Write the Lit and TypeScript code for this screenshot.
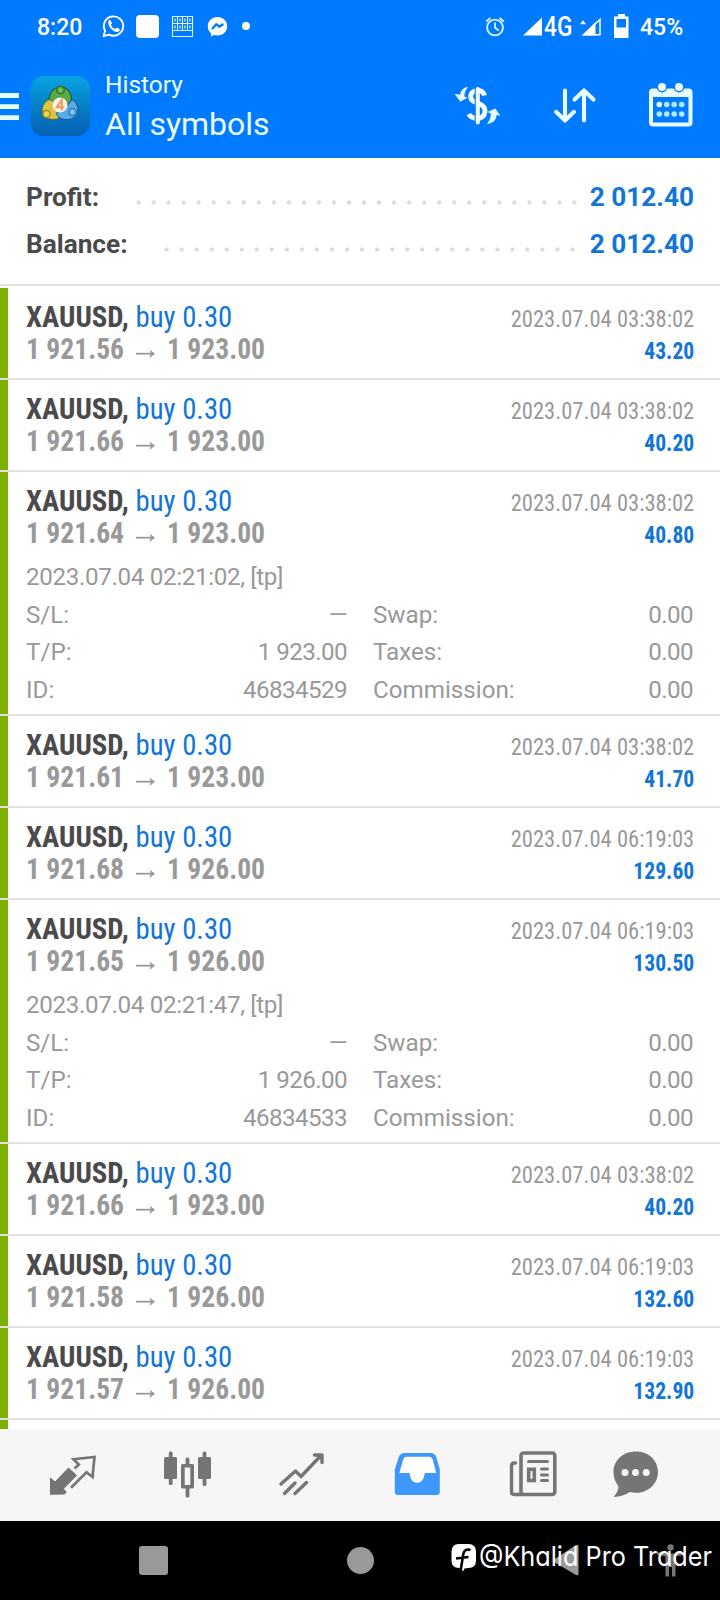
import { LitElement, html, css, svg, nothing } from "lit";
import { customElement, property } from "lit/decorators.js";

interface Deal {
  open: string;
  close: string;
  time: string;
  profit: string;
  details?: { opened: string; tp: string; id: string };
}

const DEALS: Deal[] = [
  { open: "1 921.56", close: "1 923.00", time: "2023.07.04 03:38:02", profit: "43.20" },
  { open: "1 921.66", close: "1 923.00", time: "2023.07.04 03:38:02", profit: "40.20" },
  {
    open: "1 921.64", close: "1 923.00", time: "2023.07.04 03:38:02", profit: "40.80",
    details: { opened: "2023.07.04 02:21:02, [tp]", tp: "1 923.00", id: "46834529" },
  },
  { open: "1 921.61", close: "1 923.00", time: "2023.07.04 03:38:02", profit: "41.70" },
  { open: "1 921.68", close: "1 926.00", time: "2023.07.04 06:19:03", profit: "129.60" },
  {
    open: "1 921.65", close: "1 926.00", time: "2023.07.04 06:19:03", profit: "130.50",
    details: { opened: "2023.07.04 02:21:47, [tp]", tp: "1 926.00", id: "46834533" },
  },
  { open: "1 921.66", close: "1 923.00", time: "2023.07.04 03:38:02", profit: "40.20" },
  { open: "1 921.58", close: "1 926.00", time: "2023.07.04 06:19:03", profit: "132.60" },
  { open: "1 921.57", close: "1 926.00", time: "2023.07.04 06:19:03", profit: "132.90" },
];

@customElement("status-bar")
class StatusBar extends LitElement {
  static styles = css`
    :host { display: flex; align-items: flex-start; height: 53px; color: #fff; font-weight: 500; font-size: 23px; }
    svg { display: block; flex: none; }
    .clock { width: 65px; padding-left: 37px; white-space: nowrap; line-height: 55px; }
    .gap { flex: 1; }
    .net { font-size: 27px; width: 28px; line-height: 54px; }
    .net span { display: inline-block; transform: scaleX(0.84); transform-origin: left center; }
    .pct { font-size: 23px; line-height: 55px; width: 89px; padding-left: 9px; box-sizing: border-box; }
  `;
  render() {
    return html`
      <div class="clock">8:20</div>
      <svg width="150" height="53" viewBox="102 0 150 53" fill="none">
        <path d="M103.500 36.200l1.600-5.300a9.700 9.700 0 1 1 4 3.800z" stroke="#fff" stroke-width="1.900" stroke-linejoin="round"/>
        <path d="M108.500 20.800c.8-.9 1.900-1 2.400 0l.9 2.100c.2.700-.2 1.200-.9 2 1 2 2.300 3.200 4.300 4 .6-.7 1.200-1.400 1.900-1.100l2.100 1c1 .6.600 1.800-.1 2.500-3.500 2.800-12.500-4.200-10.600-10.500z" fill="#fff"/>
        <rect x="136" y="15" width="23" height="23" rx="4" fill="#fff"/>
        <path d="M172.500 16.500h20v20h-20zM172.500 23.500h20M172.500 30.500h20M177.500 16.500v14M182.500 16.500v14M187.500 16.500v14" stroke="#d8f4ff" stroke-width="1.100"/>
        <path d="M175 18.500v3M180 18.500v3M185 18.500v3M190 18.500v3M175 25.500v3M180 25.500v3M185 25.500v3M190 25.500v3" stroke="#bfe6ff" stroke-width="1.400"/>
        <path d="M217.500 17c-5.600 0-9.700 4-9.700 9.300 0 2.900 1.200 5.300 3.100 7v3.300l3-1.700c1.100.3 2.300.5 3.600.5 5.600 0 9.700-4 9.700-9.200s-4.100-9.200-9.700-9.200z" fill="#fff"/>
        <path d="M212 29l4.300-4.800 3 2.500 4-2.700" stroke="#007aff" stroke-width="2.300" stroke-linejoin="round"/>
        <circle cx="246" cy="26" r="4" fill="#fff"/>
      </svg>
      <div class="gap"></div>
      <svg width="60" height="53" viewBox="484 0 60 53" fill="none">
        <circle cx="495" cy="27.500" r="7.900" stroke="#d8f4ff" stroke-width="1.900"/>
        <path d="M495 22.500v5.300l3.800 2.700M486.200 21.500l4.200-3.500M503.800 21.500l-4.200-3.500" stroke="#d8f4ff" stroke-width="1.800"/>
        <path d="M523 35.500L542 17.500v18z" fill="#fff"/>
      </svg>
      <div class="net"><span>4G</span></div>
      <svg width="59" height="53" viewBox="572 0 59 53" fill="none">
        <path d="M580 24.200l3-4 3 4z" fill="#fff"/>
        <path d="M582.500 35.500L595.500 22v13.500z" fill="#fff"/>
        <path d="M583.500 34.800L600 19.500v15.300z" stroke="#fff" stroke-width="1.500"/>
        <path d="M618 14h7v2.500h3.500v21.500h-14.500v-21.500h4z" fill="#fff"/>
        <rect x="616.500" y="19" width="9.500" height="8.500" fill="#007aff"/>
      </svg>
      <div class="pct">45%</div>
    `;
  }
}

@customElement("app-bar")
class AppBar extends LitElement {
  static styles = css`
    :host { display: flex; height: 105px; color: #eafcff; }
    svg { display: block; flex: none; }
    .titles { padding: 17px 0 0 15px; flex: 1; white-space: nowrap; }
    .small { font-size: 24.500px; line-height: 30px; }
    .big { font-size: 32px; line-height: 40px; margin-top: 4px; }
  `;
  render() {
    return html`
      <svg width="90" height="105" viewBox="0 53 90 105">
        <defs>
          <linearGradient id="tile" x1="0" y1="0" x2="0" y2="1">
            <stop offset="0" stop-color="#08a4e2"/><stop offset=".5" stop-color="#067fc6"/><stop offset="1" stop-color="#0560b4"/>
          </linearGradient>
          <radialGradient id="g"><stop offset="0" stop-color="#8fd46a"/><stop offset="1" stop-color="#3b8f2c"/></radialGradient>
          <radialGradient id="y"><stop offset="0" stop-color="#f9e86e"/><stop offset="1" stop-color="#d9b52e"/></radialGradient>
          <radialGradient id="b"><stop offset="0" stop-color="#9cdcff"/><stop offset="1" stop-color="#3c98dc"/></radialGradient>
        </defs>
        <path d="M0 95.500h19M0 106.700h19M0 117.700h19" stroke="#e6fbff" stroke-width="4.800"/>
        <rect x="30.500" y="76" width="59.500" height="60" rx="13" fill="url(#tile)"/>
        <path d="M60.500 87c6 0 11.500 5 11 13.500l-5 6h-13l-4.500-6c0-8.500 5.500-13.500 11.500-13.500z" fill="#58a848" stroke="#1f5a4a" stroke-width="1.200"/>
        <path d="M49 99.500c-5 2-8 8.500-6.500 15 2 4.500 10 6 16 4l3-8-5-8z" fill="#dcc445" stroke="#5d6a3b" stroke-width="1"/>
        <path d="M72 99.500c5 3 7.500 9 5 15-3 5-12 7-18 3l-3-4 9-5z" fill="#58aae2" stroke="#17528f" stroke-width="1"/>
        <circle cx="60.500" cy="90" r="4" fill="url(#g)" stroke="#26692a" stroke-width="1"/>
        <circle cx="46.500" cy="114" r="3.800" fill="url(#y)" stroke="#8b7a20" stroke-width="1"/>
        <circle cx="72.500" cy="112" r="3.800" fill="url(#b)" stroke="#2377b8" stroke-width="1"/>
        <circle cx="60" cy="105" r="7.500" fill="#f7f1ec"/>
        <path d="M61.800 110.500v-10.500l-5 7.200h7.500" fill="none" stroke="#ee9a5c" stroke-width="2"/>
      </svg>
      <div class="titles">
        <div class="small">History</div>
        <div class="big">All symbols</div>
      </div>
      <svg width="270" height="105" viewBox="450 53 270 105" fill="none" stroke-linecap="round" stroke-linejoin="round">
        <path d="M484.500 95.500c-1-4.500-6.500-6.700-11-4-4 2.600-3.700 7.600.3 10 4 2.300 11 2.600 11.200 9.300.1 6.500-5.500 8.300-9.500 7.600-3.400-.6-5.600-2-6.700-4.400" stroke="#f2fdff" stroke-width="4.800" stroke-linecap="butt"/>
        <path d="M475.300 87.500v36" stroke="#007aff" stroke-width="1.300"/>
        <path d="M477.800 89v33.500" stroke="#f2fdff" stroke-width="4"/>
        <path d="M468.300 87c-4.500.1-7.400 3-8.200 7.800l-5.500-1 5.700 8 7-4-3-1.200c.3-4 1.300-6.800 4-9.600z" fill="#e6fbff"/>
        <path d="M487 124c5.500-.5 9.300-3.400 9.700-9.200l3.700 1.200-5-7.600-8 3.700 3.500 1.500c-.2 4.400-1.300 7.300-3.900 10.400z" fill="#e6fbff"/>
        <path d="M565 90.500v30M556 111.800l9 8.700 9-8.700M584 120.500v-30M574.500 99.500l9.500-9 9.500 9" stroke="#e9fcff" stroke-width="4.100"/>
        <rect x="651" y="90.500" width="39.500" height="34" rx="2" stroke="#e9fcff" stroke-width="4"/>
        <path d="M651 90h39.500v7H651z" fill="#e9fcff"/>
        <circle cx="662" cy="87" r="5.400" fill="#007aff"/><circle cx="679" cy="87" r="5.400" fill="#007aff"/>
        <circle cx="662" cy="87" r="4" fill="#e9fcff"/><circle cx="679" cy="87" r="4" fill="#e9fcff"/>
        ${[659.3, 666.7, 674.2, 681.7].map(
          (x, i) => svg`<circle cx=${x} cy="104.500" r="2.800" fill=${i ? "#aee9ff" : "#effcff"}/><circle cx=${x} cy="114" r="2.800" fill="#aee9ff"/>`
        )}
      </svg>
    `;
  }
}

@customElement("account-summary")
class AccountSummary extends LitElement {
  static styles = css`
    :host { display: block; height: 126px; box-sizing: content-box; border-bottom: 2px solid #e2e2e2; }
    .list { padding: 16px 26px 0; }
    .line { display: flex; font-weight: 700; font-size: 26.200px; line-height: 47px; color: #4a4a4c; white-space: nowrap; }
    .value { color: #1275d8; }
    .dots { flex: none; height: 5px; margin-top: 26px; background: radial-gradient(circle at center, #dcdcdc 0 1.8px, transparent 2.500px) right center / 15.040px 5px repeat-x; }
    .profit { width: 448px; margin-right: 8px; }
    .balance { width: 420px; margin-right: 10px; }
    .gap { flex: 1; }
  `;
  render() {
    return html`<div class="list">
      <div class="line"><span>Profit:</span><span class="gap"></span><span class="dots profit"></span><span class="value">2 012.40</span></div>
      <div class="line"><span>Balance:</span><span class="gap"></span><span class="dots balance"></span><span class="value">2 012.40</span></div>
    </div>`;
  }
}

@customElement("deal-row")
class DealRow extends LitElement {
  @property({ attribute: false }) deal!: Deal;
  static styles = css`
    :host { display: block; border-bottom: 2px solid #e2e2e2; }
    .row { height: 90px; box-sizing: border-box; border-left: 8px solid #7db000; padding: 13px 26px 0 18px; }
    .open { height: 242px; }
    .top { display: flex; justify-content: space-between; height: 64px; white-space: nowrap; line-height: 32px; font-stretch: 75%; }
    .left { font-size: 30px; }
    .title { transform: scaleX(0.958); transform-origin: left center; }
    .symbol { font-weight: 700; color: #4a4a4c; }
    .side { color: #1275d8; }
    .prices { font-weight: 700; color: #999; display: flex; }
    .price { width: 97px; }
    .price span { display: inline-block; transform: scaleX(0.92); transform-origin: left center; }
    .arrow { width: 20px; height: 32px; margin: 0 10.500px 0 13px; }
    .right { font-size: 24px; text-align: right; padding-top: 2px; color: #999; }
    .time { transform: scaleX(0.94); transform-origin: right center; }
    .profit { font-weight: 700; color: #1275d8; transform: scaleX(0.9); transform-origin: right center; }
    .details { margin-top: 10px; font-size: 24.200px; line-height: 37.500px; color: #999; }
    .opened { letter-spacing: -0.350px; }
    .grid { display: grid; grid-template-columns: 321px 320px; column-gap: 26px; }
    .pair { display: flex; justify-content: space-between; }
    .num { letter-spacing: -0.600px; }
  `;
  render() {
    const d = this.deal;
    const x = d.details;
    const pair = (k: string, v: string) => html`<div class="pair"><span>${k}</span><span class="num">${v}</span></div>`;
    return html`<div class="row ${x ? "open" : ""}">
      <div class="top">
        <div class="left">
          <div class="title"><span class="symbol">XAUUSD,</span> <span class="side">buy 0.30</span></div>
          <div class="prices"><div class="price"><span>${d.open}</span></div>
            <svg class="arrow" viewBox="0 0 20 32" fill="none" stroke="#999" stroke-width="1.800"><path d="M0 20.700h17"/><path d="M13.500 16.500l5.500 4.200-5.500 4.200 1.500-4.200z" fill="#999" stroke="none"/></svg>
            <div class="price"><span>${d.close}</span></div></div>
        </div>
        <div class="right"><div class="time">${d.time}</div><div class="profit">${d.profit}</div></div>
      </div>
      ${x
        ? html`<div class="details"><div class="opened">${x.opened}</div>
            <div class="grid">
              ${pair("S/L:", "—")}${pair("Swap:", "0.00")}
              ${pair("T/P:", x.tp)}${pair("Taxes:", "0.00")}
              ${pair("ID:", x.id)}${pair("Commission:", "0.00")}
            </div></div>`
        : nothing}
    </div>`;
  }
}

@customElement("tab-bar")
class TabBar extends LitElement {
  static styles = css`
    :host { display: grid; grid-template-columns: repeat(5, 115.400px) 91px; padding-left: 14px; height: 92px; background: #f6f6f6; box-sizing: border-box; flex: none; }
    svg { display: block; width: 50px; height: 50px; margin: 20px auto 0; }
  `;
  render() {
    return html`
      <svg viewBox="47 1449 50 50" fill="none">
        <path d="M50.500 1478l4.500 4 13.500-14 8 7.400-13.200 13.600 3 2.800-1.700 2.200L50.500 1494.300z" fill="#757575" stroke="#757575" stroke-linejoin="round"/>
        <path d="M74.500 1468.500l4.300-4-5.300-5.300 21-2.200-2 20-6-4.800-15.500 15.500" stroke="#757575" stroke-width="2.700"/>
      </svg>
      <svg viewBox="162 1449 50 50">
        <g fill="#757575"><rect x="164" y="1457" width="13" height="22" rx="1.500"/><rect x="168.800" y="1451.500" width="3.800" height="33.500" rx="1.500"/>
        <rect x="198" y="1457" width="13" height="22" rx="1.500"/><rect x="202.600" y="1451.500" width="3.800" height="34.500" rx="1.500"/>
        <rect x="185.600" y="1457.500" width="3.800" height="40" rx="1.500"/><rect x="181" y="1464" width="13" height="24.500" rx="1.500"/></g>
        <rect x="184.700" y="1467.500" width="5.600" height="17.500" fill="#f6f6f6"/>
      </svg>
      <svg viewBox="277.500 1449 50 50" fill="none" stroke="#757575" stroke-width="3.400" stroke-linecap="round" stroke-linejoin="round">
        <path d="M281.500 1484l14.500-13 5.500 5.500 20.500-21.500M315 1455h7.500v7.500M285 1493.500l10.500-10.500M295.500 1493.500l11.500-11"/>
      </svg>
      <svg viewBox="393.200 1449 50 50">
        <path d="M405 1453h25.500q4.500 0 6 4l3.500 12.500v22.500q0 3-3 3h-39q-3 0-3-3v-22.500l4-12.500q1.500-4 6-4z" fill="#3e98fb"/>
        <path d="M406 1456.700h23.500q2.500 0 3.300 2.500l3.700 13.800h-11.500q-1 9.800-7.700 9.800t-7.700-9.800h-10.100l4-13.800q.8-2.500 2.500-2.500z" fill="#fff"/>
      </svg>
      <svg viewBox="508 1449 50 50" fill="none" stroke="#757575" stroke-linecap="round" stroke-linejoin="round">
        <rect x="521" y="1453" width="33.800" height="41.500" rx="2.500" stroke-width="3.600"/>
        <path d="M515.500 1463h-1q-3 0-3 3v25.500q0 3 3 3h8" stroke-width="3.400"/>
        <path d="M528.500 1461.500h19M541.500 1469h6M541.500 1475h6M541.500 1480.500h6" stroke-width="3"/>
        <rect x="528.700" y="1469.300" width="5.600" height="11.200" stroke-width="3.600" stroke-linejoin="miter"/>
      </svg>
      <svg viewBox="611.500 1449 50 50">
        <path d="M636.300 1451.500c12.500 0 22.200 8.500 22.200 20.500 0 11.800-9.700 20.800-22.200 20.800-1.800 0-4-.2-5.800-.7-4.800 3-9.800 4.600-16.500 4.900 3.500-3.700 5-7 5-10.700-3-3.700-5-8.500-5-14.300 0-12 9.800-20.500 22.300-20.500z" fill="#757575"/>
        <g fill="#f6f6f6"><circle cx="625.500" cy="1472.500" r="3.500"/><circle cx="636" cy="1472.500" r="3.500"/><circle cx="646.700" cy="1472.500" r="3.500"/></g>
      </svg>
    `;
  }
}

@customElement("system-nav")
class SystemNav extends LitElement {
  static styles = css`
    :host { display: block; position: relative; height: 79px; background: #000; flex: none; }
    .keys { display: block; }
    .mark { position: absolute; left: 451px; top: 18px; display: flex; align-items: center; color: #fff; white-space: nowrap; }
    .name { font-family: Inter, Roboto, sans-serif; font-feature-settings: "cv11"; font-size: 27.500px; line-height: 34px; height: 36px; margin-left: 3px; font-weight: 400; width: 233px; transform: scaleX(0.918); transform-origin: left center; }
  `;
  render() {
    return html`
      <svg class="keys" width="720" height="79" viewBox="0 1521 720 79" fill="#999">
        <rect x="139" y="1546" width="29" height="29" rx="3"/>
        <circle cx="360.500" cy="1560.500" r="13.500"/>
        <path d="M554 1559.500q-2 1 0 2.500l22 13q2.500 1 2.500-1v-28q0-2-2.500-1z"/>
        <g fill="#777"><circle cx="670.500" cy="1547.500" r="3.200"/><path d="M657 1552l9.500 1.500h8l9.500-1.500v2.700l-8.500 1.800v20h-3.500v-9.500h-3v9.500h-3.500v-20l-8.500-1.800z"/></g>
      </svg>
      <div class="mark">
        <svg width="25" height="34" viewBox="451 1540 25 34">
          <path d="M459 1544h9.500q7.500 0 7.500 7.500v9q0 7.500-7.500 7.500l-4 .5-1.500 3-2-3.500h-2q-7.500 0-7.500-7.500v-9q0-7.500 7.500-7.500z" fill="#fff"/>
          <path d="M470.500 1550c-4-1.500-6.500.5-7.200 4l-2.800 17.500M456 1558.500l12.500-1.500" fill="none" stroke="#000" stroke-width="2.600"/>
        </svg>
        <span class="name">@Khalid Pro Trader</span>
      </div>
    `;
  }
}

@customElement("app-root")
class AppRoot extends LitElement {
  static styles = css`
    :host { display: flex; flex-direction: column; width: 720px; height: 1600px; overflow: hidden; background: #fff; font-family: Roboto, sans-serif; }
    .head { background: #007aff; flex: none; height: 158px; }
    .summary { flex: none; }
    .deals { flex: 1; min-height: 0; overflow: hidden; padding-top: 2px; }
    .next { height: 20px; width: 8px; background: #7db000; }
  `;
  render() {
    return html`
      <div class="head"><status-bar></status-bar><app-bar></app-bar></div>
      <account-summary class="summary"></account-summary>
      <div class="deals">
        ${DEALS.map((d) => html`<deal-row .deal=${d}></deal-row>`)}
        <div class="next"></div>
      </div>
      <tab-bar></tab-bar>
      <system-nav></system-nav>
    `;
  }
}
